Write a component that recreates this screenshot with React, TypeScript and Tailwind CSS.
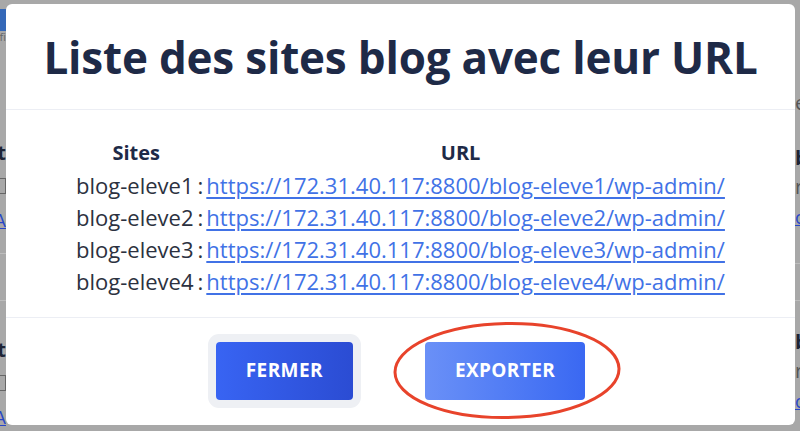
import React from 'react';

const sites = [
  { name: 'blog-eleve1', url: 'https://172.31.40.117:8800/blog-eleve1/wp-admin/' },
  { name: 'blog-eleve2', url: 'https://172.31.40.117:8800/blog-eleve2/wp-admin/' },
  { name: 'blog-eleve3', url: 'https://172.31.40.117:8800/blog-eleve3/wp-admin/' },
  { name: 'blog-eleve4', url: 'https://172.31.40.117:8800/blog-eleve4/wp-admin/' },
];

// dimmed page behind the dialog, only its edges show
const LeftEdge = () => (
  <div className="w-[6px] overflow-hidden flex flex-col items-end">
    <div className="mt-[9px] h-[22px] w-[30px] shrink-0 bg-[#3468b8]" />
    <div className="h-[12px] text-[11px] leading-[12px] text-[#666]">fi</div>
    {[0, 1].map((i) => (
      <div key={i} className={`flex flex-col items-end w-[60px] ${i === 0 ? 'mt-[94px]' : 'mt-[33px]'}`}>
        <div className="h-[32px] flex items-center text-[20px] font-bold text-[#1e2436] whitespace-nowrap">Liste et</div>
        <div className="h-[34px] flex items-center">
          <div className="h-[16px] w-[30px] border border-[#666]" />
        </div>
        <div className="h-[34px] flex items-center text-[18px] text-[#2746c8] underline whitespace-nowrap">Voir A</div>
        <div className="h-[16px]" />
        <div className="h-px w-full bg-[#bdbdbd]" />
        <div className="h-[46px]" />
        <div className="h-px w-full bg-[#bdbdbd]" />
      </div>
    ))}
  </div>
);

const RightEdge = () => (
  <div className="w-[5px] overflow-hidden flex flex-col items-start">
    <div className="mt-[91px] h-[24px] flex items-center text-[20px] text-[#555]">e</div>
    {[0, 1].map((i) => (
      <div key={i} className={`flex flex-col items-start w-[60px] ${i === 0 ? 'mt-[27px]' : 'mt-[25px]'}`}>
        <div className="h-[32px] flex items-center text-[20px] font-bold text-[#1e2436] whitespace-nowrap">blog</div>
        <div className="h-[26px] flex items-center text-[20px] text-[#555] whitespace-nowrap">rien</div>
        <div className="h-[34px] flex items-center text-[18px] text-[#2746c8] underline whitespace-nowrap">ouvrir</div>
        <div className="h-[29px]" />
        <div className="h-px w-full bg-[#bdbdbd]" />
        <div className="h-[36px]" />
        <div className="h-px w-full bg-[#bdbdbd]" />
      </div>
    ))}
  </div>
);

export default function App() {
  return (
    <div
      className="relative w-[800px] h-[431px] overflow-hidden bg-[#a8a8a8] flex justify-between"
      style={{ fontFamily: '"Open Sans", "Noto Sans", sans-serif' }}
    >
      <LeftEdge />
      <RightEdge />

      {/* Dialog */}
      <div className="absolute left-[6px] top-[4px] w-[789px] h-[421px] bg-white rounded-[6px] flex flex-col">
        <div className="h-[106px] shrink-0 flex items-center justify-center border-b border-[#eceef4]">
          <h1 className="text-[44px] font-bold text-[#1e2a47] tracking-[-0.2px]">
            Liste des sites blog avec leur URL
          </h1>
        </div>

        <div className="h-[208px] shrink-0 flex justify-center pt-[27px] border-b border-[#eceef4]">
          <div className="grid grid-cols-[auto_auto] content-start leading-[32px] text-[#2c3140]">
            <div className="text-[20px] font-bold text-[#1e2a47] text-center h-[32px] pr-[10px]">Sites</div>
            <div className="text-[20px] font-bold text-[#1e2a47] text-center h-[32px] pr-[10px]">URL</div>
            {sites.map((s) => (
              <React.Fragment key={s.name}>
                <div className="text-[22px] text-right whitespace-nowrap">
                  {s.name}
                  <span className="ml-[4px] mr-[3px]">:</span>
                </div>
                <div className="text-[22px]">
                  <a href="#" className="text-[#4172e6] underline underline-offset-[3px] whitespace-nowrap">
                    {s.url}
                  </a>
                </div>
              </React.Fragment>
            ))}
          </div>
        </div>

        <div className="flex-1 flex items-center justify-center gap-[72px] pb-[2px]">
          <button className="h-[58px] px-[30px] rounded-[4px] text-white text-[19px] font-bold tracking-[0.4px] bg-gradient-to-r from-[#3864f3] to-[#2b4cd3] shadow-[0_0_0_8px_#eef0f4]">
            FERMER
          </button>
          <button className="h-[58px] px-[30px] rounded-[4px] text-white text-[19px] font-bold tracking-[0.4px] bg-gradient-to-r from-[#6a90f7] to-[#3a68f2]">
            EXPORTER
          </button>
        </div>
      </div>

      {/* hand-drawn annotation */}
      <svg className="absolute left-0 top-0 pointer-events-none" width="800" height="431">
        <ellipse cx="507" cy="370.5" rx="112" ry="47" fill="none" stroke="#e8432b" strokeWidth="3" transform="rotate(-1 507 370)" />
      </svg>
    </div>
  );
}
